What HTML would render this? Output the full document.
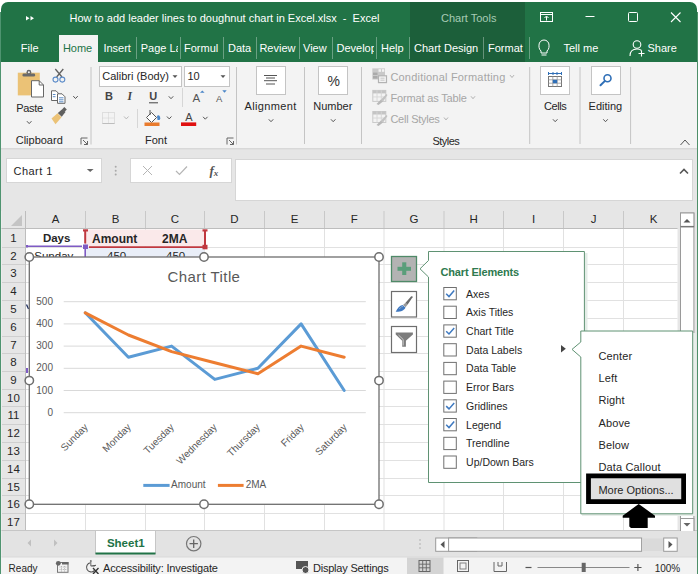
<!DOCTYPE html>
<html><head><meta charset="utf-8">
<style>
*{margin:0;padding:0;box-sizing:border-box}
html,body{width:700px;height:574px;overflow:hidden;background:#fff;font-family:"Liberation Sans",sans-serif;color:#262626}
.a{position:absolute}
.t{position:absolute;line-height:1;white-space:nowrap}
svg{position:absolute;overflow:visible}
</style></head><body>
<div class="a" style="left:0px;top:0px;width:700px;height:574px;background:#fff"></div>
<div class="a" style="left:0px;top:12px;width:697.5px;height:562px;background:#f3f3f3;border-left:1.6px solid #4f9470;border-right:1.2px solid #4e8f69"></div>
<div class="a" style="left:1px;top:2px;width:696px;height:60px;background:#217346;border-radius:7px 7px 0 0"></div>
<div class="a" style="left:410px;top:2px;width:115px;height:60px;background:#1c5f3a"></div>
<svg style="left:0;top:0" width="700" height="62"><path d="M26 16 L29.5 18.2 L26 20.4Z M30.5 16 L34 18.2 L30.5 20.4Z" fill="#fff"/><rect x="540.5" y="12.5" width="12" height="9" fill="none" stroke="#fff" stroke-width="1"/><line x1="540.5" y1="14.5" x2="552.5" y2="14.5" stroke="#fff"/><path d="M546.5 20.5 V16.5 M544.5 18 L546.5 16 L548.5 18" fill="none" stroke="#fff"/><line x1="585.5" y1="16.5" x2="594.5" y2="16.5" stroke="#fff"/><rect x="628.5" y="12.5" width="9" height="9" rx="1" fill="none" stroke="#fff"/><path d="M671 12.5 L680.5 22 M680.5 12.5 L671 22" stroke="#fff" stroke-width="1.1"/><path d="M541 51 C538.5 49 539 45.5 539 45 A5 5 0 0 1 549 45 C549 45.5 549.5 49 547 51 V53 H541Z" fill="none" stroke="#fff" stroke-width="1"/><line x1="541.5" y1="55" x2="546.5" y2="55" stroke="#fff"/><circle cx="637" cy="44.5" r="3.8" fill="none" stroke="#fff" stroke-width="1.1"/><path d="M630 56 C630 51 633 49 637 49 C639 49 640.5 49.5 641.5 50.5" fill="none" stroke="#fff" stroke-width="1.1"/><path d="M641.5 50.5 V56.5 M638.5 53.5 H644.5" stroke="#fff" stroke-width="1.1"/></svg>
<div class="t" style="left:69.5px;top:12.79px;font-size:11px;color:#fff;font-weight:400;">How to add leader lines to doughnut chart in Excel.xlsx &nbsp;- &nbsp;Excel</div>
<div class="t" style="left:441.0px;top:12.79px;font-size:11px;color:#a8cbb5;font-weight:400;">Chart Tools</div>
<div class="a" style="left:59px;top:35px;width:39px;height:28px;background:#f3f3f3"></div>
<div class="t" style="left:20.8px;top:42.79px;font-size:11px;color:#fff;font-weight:400;">File</div>
<div class="t" style="left:62.9px;top:42.79px;font-size:11px;color:#217346;font-weight:400;">Home</div>
<div class="t" style="left:103.4px;top:42.79px;font-size:11px;color:#fff;font-weight:400;">Insert</div>
<div class="t" style="left:140.7px;top:42.79px;font-size:11px;color:#fff;font-weight:400;">Page L<span style="display:inline-block;width:2.6px;overflow:hidden;vertical-align:top">a</span></div>
<div class="t" style="left:184.0px;top:42.79px;font-size:11px;color:#fff;font-weight:400;">Formul</div>
<div class="t" style="left:228.0px;top:42.79px;font-size:11px;color:#fff;font-weight:400;">Data</div>
<div class="t" style="left:259.4px;top:42.79px;font-size:11px;color:#fff;font-weight:400;">Review</div>
<div class="t" style="left:303.0px;top:42.79px;font-size:11px;color:#fff;font-weight:400;">View</div>
<div class="t" style="left:336.5px;top:42.79px;font-size:11px;color:#fff;font-weight:400;">Develo<span style="display:inline-block;width:3.5px;overflow:hidden;vertical-align:top">p</span></div>
<div class="t" style="left:381.0px;top:42.79px;font-size:11px;color:#fff;font-weight:400;">Help</div>
<div class="t" style="left:414.0px;top:42.79px;font-size:11px;color:#fff;font-weight:400;">Chart Design</div>
<div class="t" style="left:488.0px;top:42.79px;font-size:11px;color:#fff;font-weight:400;">Format</div>
<div class="t" style="left:563.5px;top:42.79px;font-size:11px;color:#fff;font-weight:400;">Tell me</div>
<div class="t" style="left:647.5px;top:42.79px;font-size:11px;color:#fff;font-weight:400;">Share</div>
<div class="a" style="left:136px;top:37px;width:1px;height:22px;background:rgba(255,255,255,.33)"></div>
<div class="a" style="left:180px;top:37px;width:1px;height:22px;background:rgba(255,255,255,.33)"></div>
<div class="a" style="left:223px;top:37px;width:1px;height:22px;background:rgba(255,255,255,.33)"></div>
<div class="a" style="left:255.5px;top:37px;width:1px;height:22px;background:rgba(255,255,255,.33)"></div>
<div class="a" style="left:298.5px;top:37px;width:1px;height:22px;background:rgba(255,255,255,.33)"></div>
<div class="a" style="left:331.5px;top:37px;width:1px;height:22px;background:rgba(255,255,255,.33)"></div>
<div class="a" style="left:375.5px;top:37px;width:1px;height:22px;background:rgba(255,255,255,.33)"></div>
<div class="a" style="left:409px;top:37px;width:1px;height:22px;background:rgba(255,255,255,.33)"></div>
<div class="a" style="left:482.5px;top:37px;width:1px;height:22px;background:rgba(255,255,255,.33)"></div>
<div class="a" style="left:528.5px;top:37px;width:1px;height:22px;background:rgba(255,255,255,.33)"></div>
<svg style="left:0;top:0" width="700" height="150"><rect x="17.8" y="72.7" width="22" height="22.7" fill="#ebc276"/><rect x="22.5" y="73.5" width="12.6" height="3" rx="1.3" fill="#6a6a6a"/><circle cx="28.9" cy="72.2" r="2.4" fill="#6a6a6a"/><circle cx="28.9" cy="72.2" r="1" fill="#f3f3f3"/><path d="M31.5 80.7 H39.2 L43.5 85 V97 H31.5Z" fill="#fff" stroke="#676767" stroke-width="1"/><path d="M39.2 80.7 V85 H43.5" fill="none" stroke="#676767" stroke-width="1"/><path d="M55.3 69 L62 77 M63.3 69 L56.6 77" stroke="#616161" stroke-width="1.3"/><circle cx="55.5" cy="79.6" r="2.5" fill="none" stroke="#5b8bc9" stroke-width="1.1"/><circle cx="62.3" cy="79.6" r="2.5" fill="#f3f3f3" stroke="#5b8bc9" stroke-width="1.1"/><path d="M51.5 90.8 H56 L58.5 93.3 V100.5 H51.5Z" fill="#fff" stroke="#666" stroke-width="1"/><path d="M52.8 94.5 H55.5 M52.8 96.7 H55.5" stroke="#4a7fc0" stroke-width=".9"/><path d="M57.5 93.8 H62 L65 96.8 V103.3 H57.5Z" fill="#fff" stroke="#666" stroke-width="1"/><path d="M59 97.8 H63.5 M59 99.8 H63.5 M59 101.8 H63.5" stroke="#4a7fc0" stroke-width=".9"/><path d="M51.5 118.5 L57.5 113.2 L61.5 117.2 L55.5 124.2 Z" fill="#ebc276"/><path d="M57.8 113 L62.5 109 L65.5 112 L61.7 116.8Z" fill="#5f5f5f"/><path d="M62.2 109.2 L64.3 107 L66.8 109.6 L64.6 111.7Z" fill="#5f5f5f"/><path d="M26.95 121.2 L29.2 123.60000000000001 L31.45 121.2" fill="none" stroke="#555" stroke-width="1"/><path d="M73.25 96.1 L75.5 98.5 L77.75 96.1" fill="none" stroke="#555" stroke-width="1"/><path d="M168.75 96.3 L171 98.7 L173.25 96.3" fill="none" stroke="#555" stroke-width="1"/><path d="M124.05 116.5 L126.3 118.9 L128.55 116.5" fill="none" stroke="#b8b8b8" stroke-width="1"/><path d="M166.95 116.5 L169.2 118.9 L171.45 116.5" fill="none" stroke="#555" stroke-width="1"/><path d="M203.05 116.8 L205.3 119.2 L207.55 116.8" fill="none" stroke="#555" stroke-width="1"/><path d="M268.75 119.3 L271 121.7 L273.25 119.3" fill="none" stroke="#555" stroke-width="1"/><path d="M330.95 119.3 L333.2 121.7 L335.45 119.3" fill="none" stroke="#555" stroke-width="1"/><path d="M552.95 119.3 L555.2 121.7 L557.45 119.3" fill="none" stroke="#555" stroke-width="1"/><path d="M603.25 119.3 L605.5 121.7 L607.75 119.3" fill="none" stroke="#555" stroke-width="1"/><path d="M510.0 75.1 L512 77.5 L514.0 75.1" fill="none" stroke="#b0b0b0" stroke-width="1"/><path d="M471.0 96.3 L473 98.7 L475.0 96.3" fill="none" stroke="#b0b0b0" stroke-width="1"/><path d="M444.0 117.5 L446 119.9 L448.0 117.5" fill="none" stroke="#b0b0b0" stroke-width="1"/><path d="M81.0 144.5 V138.0 H87.5" fill="none" stroke="#666" stroke-width="1"/><path d="M83.0 140.0 L87.5 144.5 M87.5 141.0 V144.5 H84.0" fill="none" stroke="#666" stroke-width="1"/><path d="M227.0 144.5 V138.0 H233.5" fill="none" stroke="#666" stroke-width="1"/><path d="M229.0 140.0 L233.5 144.5 M233.5 141.0 V144.5 H230.0" fill="none" stroke="#666" stroke-width="1"/><line x1="91" y1="67" x2="91" y2="144.5" stroke="#c4c4c4" stroke-width="1"/><line x1="236.5" y1="67" x2="236.5" y2="144.5" stroke="#c4c4c4" stroke-width="1"/><line x1="304.5" y1="67" x2="304.5" y2="144" stroke="#c4c4c4" stroke-width="1"/><line x1="361.5" y1="67" x2="361.5" y2="144" stroke="#c4c4c4" stroke-width="1"/><line x1="529.7" y1="67" x2="529.7" y2="144" stroke="#c4c4c4" stroke-width="1"/><line x1="580" y1="67" x2="580" y2="144" stroke="#c4c4c4" stroke-width="1"/><line x1="630.6" y1="67" x2="630.6" y2="144" stroke="#c4c4c4" stroke-width="1"/><line x1="182.5" y1="88" x2="182.5" y2="107" stroke="#d6d6d6"/><line x1="137.5" y1="109" x2="137.5" y2="128" stroke="#d6d6d6"/><rect x="99.5" y="66.5" width="82" height="20" fill="#fff" stroke="#c4c4c4"/><rect x="184.5" y="66.5" width="45" height="20" fill="#fff" stroke="#c4c4c4"/><path d="M172.5 75.3 H177.5 L175 78Z M220.5 75.3 H225.5 L223 78Z" fill="#555"/><line x1="149" y1="102.8" x2="158" y2="102.8" stroke="#444" stroke-width="1"/><path d="M200 92.8 L202.3 90.5 L204.6 92.8Z" fill="#4a86c8"/><path d="M222.3 90.3 L226.7 90.3 L224.5 92.7Z" fill="#4a86c8"/><rect x="102.5" y="112.5" width="12" height="11" fill="none" stroke="#c8c8c8" stroke-dasharray="1 1"/><path d="M108.5 112.5 V123.5 M102.5 118 H114.5" stroke="#d0d0d0" stroke-dasharray="1 1"/><line x1="102.5" y1="123.5" x2="114.5" y2="123.5" stroke="#bdbdbd"/><path d="M146.5 117.5 L151.5 112.5 L156.5 117.5 L151.5 122.5Z" fill="#fff" stroke="#555" stroke-width="1"/><path d="M150 110 V115" stroke="#555" stroke-width="1"/><path d="M157 116 A2 2.5 0 0 1 159.5 120 L157.5 120Z" fill="#4a86c8"/><rect x="144.5" y="122.5" width="15" height="3.5" fill="#e97b2d"/><rect x="181" y="122.4" width="15.2" height="3.6" fill="#e01010"/><rect x="256.5" y="66.5" width="29" height="28" fill="#fff" stroke="#c4c4c4"/><rect x="318.5" y="66.5" width="29" height="28" fill="#fff" stroke="#c4c4c4"/><rect x="540.5" y="66.5" width="29" height="28" fill="#fff" stroke="#c4c4c4"/><rect x="591.5" y="66.5" width="29" height="28" fill="#fff" stroke="#c4c4c4"/><path d="M264 75.5 H277 M266 78 H275 M264 80.7 H277 M266 84 H275" stroke="#555" stroke-width="1"/><rect x="548.5" y="76.5" width="13" height="10" fill="#fff" stroke="#777"/><path d="M548.5 79.8 H561.5 M548.5 83.2 H561.5 M552.8 76.5 V86.5 M557.2 76.5 V86.5" stroke="#999" stroke-width=".8"/><rect x="552.8" y="79.8" width="4.4" height="3.4" fill="#2f6fb7"/><path d="M548.5 73.5 H561.5 M548.5 72 V75 M553 72 V75 M557 72 V75 M561.5 72 V75" stroke="#2f6fb7" stroke-width="1"/><circle cx="607.5" cy="78.3" r="3.5" fill="none" stroke="#2f6fb7" stroke-width="1.6"/><line x1="604.7" y1="81.1" x2="600.5" y2="85.3" stroke="#2f6fb7" stroke-width="2" stroke-linecap="round"/><rect x="372.3" y="68.4" width="12.7" height="11.1" fill="#c9c9c9"/><rect x="378.5" y="69.2" width="2.6" height="2.6" fill="#f3f3f3"/><rect x="382" y="69.2" width="2.3" height="2.6" fill="#f3f3f3"/><rect x="373" y="72.6" width="4.5" height="2.4" fill="#aaa"/><rect x="373" y="76" width="4.5" height="2.6" fill="#aaa"/><rect x="378.5" y="75.8" width="8" height="6.8" fill="#f3f3f3" stroke="#b3b3b3" stroke-width="1.2"/><path d="M380.5 78.2 H384.5 M380.5 80.2 H384.5" stroke="#bbb" stroke-width=".8"/><rect x="372.8" y="90.4" width="13" height="11" fill="#f3f3f3" stroke="#cacaca" stroke-width="1"/><rect x="372.8" y="90.4" width="13" height="3" fill="#c4c4c4"/><path d="M372.8 96.9 H385.8 M377 90.4 V101.4 M381.3 90.4 V101.4" stroke="#d6d6d6" stroke-width=".9"/><path d="M376.5 103.9 L381 99.4 L383 101.4 L378.5 104.9Z" fill="#b8b8b8"/><path d="M381 99.4 L386.5 93.9 L387.5 94.9 L383 101.4Z" fill="#c2c2c2"/><rect x="372.8" y="111.5" width="13" height="11" fill="#f3f3f3" stroke="#cacaca" stroke-width="1"/><rect x="372.8" y="111.5" width="13" height="3" fill="#c4c4c4"/><path d="M372.8 118 H385.8 M377 111.5 V122.5 M381.3 111.5 V122.5" stroke="#d6d6d6" stroke-width=".9"/><path d="M376.5 125 L381 120.5 L383 122.5 L378.5 126Z" fill="#b8b8b8"/><path d="M381 120.5 L386.5 115 L387.5 116 L383 122.5Z" fill="#c2c2c2"/><path d="M680.5 145 L685 140 L689.5 145" fill="none" stroke="#555" stroke-width="1"/></svg>
<div class="t" style="left:16.3px;top:102.59px;font-size:11px;color:#262626;font-weight:400;letter-spacing:-.35px">Paste</div>
<div class="t" style="left:15.7px;top:135.49px;font-size:11px;color:#262626;font-weight:400;">Clipboard</div>
<div class="t" style="left:102.2px;top:70.69px;font-size:11px;color:#262626;font-weight:400;">Calibri (Body)</div>
<div class="t" style="left:187.5px;top:70.69px;font-size:11px;color:#262626;font-weight:400;">10</div>
<div class="t" style="left:104.9px;top:91.09px;font-size:11px;color:#444;font-weight:700;">B</div>
<div class="t" style="left:127.5px;top:90.67px;font-size:11.5px;color:#444;font-weight:700;font-family:Liberation Serif"><i>I</i></div>
<div class="t" style="left:149.2px;top:91.09px;font-size:11px;color:#444;font-weight:700;">U</div>
<div class="t" style="left:192.6px;top:92.77px;font-size:11.5px;color:#555;font-weight:400;">A</div>
<div class="t" style="left:216.0px;top:94.46px;font-size:9.5px;color:#555;font-weight:400;">A</div>
<div class="t" style="left:185.2px;top:111.99px;font-size:11px;color:#444;font-weight:400;">A</div>
<div class="t" style="left:145.0px;top:135.29px;font-size:11px;color:#262626;font-weight:400;">Font</div>
<div class="t" style="left:244.5px;top:100.59px;font-size:11px;color:#262626;font-weight:400;letter-spacing:.35px">Alignment</div>
<div class="t" style="left:313.2px;top:100.59px;font-size:11px;color:#262626;font-weight:400;">Number</div>
<div class="t" style="left:327.5px;top:73.95px;font-size:14px;color:#333;font-weight:400;">%</div>
<div class="t" style="left:390.4px;top:71.59px;font-size:11px;color:#a6a6a6;font-weight:400;letter-spacing:.2px">Conditional Formatting</div>
<div class="t" style="left:390.4px;top:92.79px;font-size:11px;color:#a6a6a6;font-weight:400;letter-spacing:-.15px">Format as Table</div>
<div class="t" style="left:390.4px;top:113.89px;font-size:11px;color:#a6a6a6;font-weight:400;letter-spacing:-.25px">Cell Styles</div>
<div class="t" style="left:432.4px;top:135.69px;font-size:11px;color:#262626;font-weight:400;letter-spacing:-.5px">Styles</div>
<div class="t" style="left:543.9px;top:100.59px;font-size:11px;color:#262626;font-weight:400;letter-spacing:-.4px">Cells</div>
<div class="t" style="left:588.6px;top:100.59px;font-size:11px;color:#262626;font-weight:400;">Editing</div>
<div class="a" style="left:1px;top:148px;width:696px;height:63px;background:#e6e6e6"></div>
<div class="a" style="left:1px;top:147.5px;width:696px;height:1px;background:#d8d8d8"></div>
<div class="a" style="left:1px;top:148.5px;width:696px;height:1.5px;background:#e0e0e0"></div>
<svg style="left:0;top:0" width="700" height="210"><rect x="6.5" y="158.5" width="95" height="24" fill="#fff" stroke="#d6d6d6"/><path d="M86.8 169 H93.6 L90.2 172Z" fill="#666"/><circle cx="115.7" cy="166.7" r="1" fill="#aaa"/><circle cx="115.7" cy="170.7" r="1" fill="#aaa"/><circle cx="115.7" cy="174.5" r="1" fill="#aaa"/><rect x="130.5" y="158.5" width="101" height="24" fill="#fff" stroke="#d6d6d6"/><path d="M143 166 L152 175 M152 166 L143 175" stroke="#b5b5b5" stroke-width="1"/><path d="M176 171 L179.5 174.5 L187 166.5" fill="none" stroke="#b5b5b5" stroke-width="1.2"/><rect x="235.5" y="159.5" width="457" height="41" fill="#fff" stroke="#d6d6d6"/><path d="M680 173.5 L684 169.5 L688 173.5" fill="none" stroke="#555" stroke-width="1.6"/></svg>
<div class="t" style="left:13.6px;top:166.09px;font-size:11px;color:#262626;font-weight:400;letter-spacing:.45px">Chart 1</div>
<div class="t" style="left:209.5px;top:164.00px;font-size:13px;color:#555;font-weight:700;font-family:Liberation Serif"><i>f</i><span style="font-size:9px;position:relative;top:1px"><i>x</i></span></div>
<svg style="left:0;top:0" width="700" height="574"><rect x="1.5" y="211" width="695.5" height="320" fill="#e6e6e6"/><rect x="26" y="229" width="651.5" height="302" fill="#fff"/><line x1="85.5" y1="229" x2="85.5" y2="531" stroke="#e1e1e1" stroke-width="1"/><line x1="145.5" y1="229" x2="145.5" y2="531" stroke="#e1e1e1" stroke-width="1"/><line x1="204.5" y1="229" x2="204.5" y2="531" stroke="#e1e1e1" stroke-width="1"/><line x1="264.5" y1="229" x2="264.5" y2="531" stroke="#e1e1e1" stroke-width="1"/><line x1="324.5" y1="229" x2="324.5" y2="531" stroke="#e1e1e1" stroke-width="1"/><line x1="384" y1="229" x2="384" y2="531" stroke="#e1e1e1" stroke-width="1"/><line x1="444" y1="229" x2="444" y2="531" stroke="#e1e1e1" stroke-width="1"/><line x1="503.5" y1="229" x2="503.5" y2="531" stroke="#e1e1e1" stroke-width="1"/><line x1="563.5" y1="229" x2="563.5" y2="531" stroke="#e1e1e1" stroke-width="1"/><line x1="623.5" y1="229" x2="623.5" y2="531" stroke="#e1e1e1" stroke-width="1"/><line x1="26" y1="247.5" x2="677.5" y2="247.5" stroke="#e1e1e1" stroke-width="1"/><line x1="26" y1="264.5" x2="677.5" y2="264.5" stroke="#e1e1e1" stroke-width="1"/><line x1="26" y1="282.5" x2="677.5" y2="282.5" stroke="#e1e1e1" stroke-width="1"/><line x1="26" y1="300.5" x2="677.5" y2="300.5" stroke="#e1e1e1" stroke-width="1"/><line x1="26" y1="318.5" x2="677.5" y2="318.5" stroke="#e1e1e1" stroke-width="1"/><line x1="26" y1="336.5" x2="677.5" y2="336.5" stroke="#e1e1e1" stroke-width="1"/><line x1="26" y1="353.5" x2="677.5" y2="353.5" stroke="#e1e1e1" stroke-width="1"/><line x1="26" y1="371.5" x2="677.5" y2="371.5" stroke="#e1e1e1" stroke-width="1"/><line x1="26" y1="389.5" x2="677.5" y2="389.5" stroke="#e1e1e1" stroke-width="1"/><line x1="26" y1="406.5" x2="677.5" y2="406.5" stroke="#e1e1e1" stroke-width="1"/><line x1="26" y1="424.5" x2="677.5" y2="424.5" stroke="#e1e1e1" stroke-width="1"/><line x1="26" y1="442.5" x2="677.5" y2="442.5" stroke="#e1e1e1" stroke-width="1"/><line x1="26" y1="460.5" x2="677.5" y2="460.5" stroke="#e1e1e1" stroke-width="1"/><line x1="26" y1="478.5" x2="677.5" y2="478.5" stroke="#e1e1e1" stroke-width="1"/><line x1="26" y1="495.5" x2="677.5" y2="495.5" stroke="#e1e1e1" stroke-width="1"/><line x1="26" y1="513.5" x2="677.5" y2="513.5" stroke="#e1e1e1" stroke-width="1"/><line x1="85.5" y1="211" x2="85.5" y2="229" stroke="#c8c8c8" stroke-width="1"/><line x1="145.5" y1="211" x2="145.5" y2="229" stroke="#c8c8c8" stroke-width="1"/><line x1="204.5" y1="211" x2="204.5" y2="229" stroke="#c8c8c8" stroke-width="1"/><line x1="264.5" y1="211" x2="264.5" y2="229" stroke="#c8c8c8" stroke-width="1"/><line x1="324.5" y1="211" x2="324.5" y2="229" stroke="#c8c8c8" stroke-width="1"/><line x1="384" y1="211" x2="384" y2="229" stroke="#c8c8c8" stroke-width="1"/><line x1="444" y1="211" x2="444" y2="229" stroke="#c8c8c8" stroke-width="1"/><line x1="503.5" y1="211" x2="503.5" y2="229" stroke="#c8c8c8" stroke-width="1"/><line x1="563.5" y1="211" x2="563.5" y2="229" stroke="#c8c8c8" stroke-width="1"/><line x1="623.5" y1="211" x2="623.5" y2="229" stroke="#c8c8c8" stroke-width="1"/><line x1="2" y1="247.5" x2="25.5" y2="247.5" stroke="#cfcfcf" stroke-width="1"/><line x1="2" y1="264.5" x2="25.5" y2="264.5" stroke="#cfcfcf" stroke-width="1"/><line x1="2" y1="282.5" x2="25.5" y2="282.5" stroke="#cfcfcf" stroke-width="1"/><line x1="2" y1="300.5" x2="25.5" y2="300.5" stroke="#cfcfcf" stroke-width="1"/><line x1="2" y1="318.5" x2="25.5" y2="318.5" stroke="#cfcfcf" stroke-width="1"/><line x1="2" y1="336.5" x2="25.5" y2="336.5" stroke="#cfcfcf" stroke-width="1"/><line x1="2" y1="353.5" x2="25.5" y2="353.5" stroke="#cfcfcf" stroke-width="1"/><line x1="2" y1="371.5" x2="25.5" y2="371.5" stroke="#cfcfcf" stroke-width="1"/><line x1="2" y1="389.5" x2="25.5" y2="389.5" stroke="#cfcfcf" stroke-width="1"/><line x1="2" y1="406.5" x2="25.5" y2="406.5" stroke="#cfcfcf" stroke-width="1"/><line x1="2" y1="424.5" x2="25.5" y2="424.5" stroke="#cfcfcf" stroke-width="1"/><line x1="2" y1="442.5" x2="25.5" y2="442.5" stroke="#cfcfcf" stroke-width="1"/><line x1="2" y1="460.5" x2="25.5" y2="460.5" stroke="#cfcfcf" stroke-width="1"/><line x1="2" y1="478.5" x2="25.5" y2="478.5" stroke="#cfcfcf" stroke-width="1"/><line x1="2" y1="495.5" x2="25.5" y2="495.5" stroke="#cfcfcf" stroke-width="1"/><line x1="2" y1="513.5" x2="25.5" y2="513.5" stroke="#cfcfcf" stroke-width="1"/><line x1="1.5" y1="228.5" x2="677.5" y2="228.5" stroke="#bdbdbd" stroke-width="1"/><line x1="25.5" y1="211" x2="25.5" y2="531" stroke="#bdbdbd" stroke-width="1"/><line x1="1.5" y1="530.5" x2="697" y2="530.5" stroke="#c6c6c6" stroke-width="1"/><path d="M22 215 V226 H11Z" fill="#c4c4c4"/><rect x="86" y="229.5" width="118.5" height="17" fill="#fae9ea"/><rect x="86" y="248" width="118.5" height="9" fill="#e9eef8"/><rect x="26" y="248" width="59" height="9" fill="#fff"/><rect x="680.5" y="213" width="13.4" height="318" fill="#fff" stroke="#9a9a9a" stroke-width="1"/><rect x="680.5" y="213" width="13.4" height="14" fill="#fff" stroke="#9a9a9a" stroke-width="1"/><line x1="680.5" y1="226.5" x2="694" y2="226.5" stroke="#777" stroke-width="1.2"/><path d="M683.5 222.5 H690.5 L687 219Z" fill="#555"/><rect x="680.5" y="518.5" width="13.4" height="13" fill="#fff" stroke="#9a9a9a" stroke-width="1"/><path d="M683.5 523 H690.5 L687 526.5Z" fill="#666"/></svg>
<div class="t" style="left:25.5px;width:60.0px;text-align:center;top:214.37px;font-size:11.5px;color:#262626">A</div>
<div class="t" style="left:85.5px;width:60.0px;text-align:center;top:214.37px;font-size:11.5px;color:#262626">B</div>
<div class="t" style="left:145.5px;width:59.0px;text-align:center;top:214.37px;font-size:11.5px;color:#262626">C</div>
<div class="t" style="left:204.5px;width:60.0px;text-align:center;top:214.37px;font-size:11.5px;color:#262626">D</div>
<div class="t" style="left:264.5px;width:60.0px;text-align:center;top:214.37px;font-size:11.5px;color:#262626">E</div>
<div class="t" style="left:324.5px;width:59.5px;text-align:center;top:214.37px;font-size:11.5px;color:#262626">F</div>
<div class="t" style="left:384px;width:60px;text-align:center;top:214.37px;font-size:11.5px;color:#262626">G</div>
<div class="t" style="left:444px;width:59.5px;text-align:center;top:214.37px;font-size:11.5px;color:#262626">H</div>
<div class="t" style="left:503.5px;width:60.0px;text-align:center;top:214.37px;font-size:11.5px;color:#262626">I</div>
<div class="t" style="left:563.5px;width:60.0px;text-align:center;top:214.37px;font-size:11.5px;color:#262626">J</div>
<div class="t" style="left:623.5px;width:60.0px;text-align:center;top:214.37px;font-size:11.5px;color:#262626">K</div>
<div class="t" style="left:1.5px;width:24px;text-align:center;top:233.27px;font-size:11.5px;color:#262626">1</div>
<div class="t" style="left:1.5px;width:24px;text-align:center;top:250.77px;font-size:11.5px;color:#262626">2</div>
<div class="t" style="left:1.5px;width:24px;text-align:center;top:268.27px;font-size:11.5px;color:#262626">3</div>
<div class="t" style="left:1.5px;width:24px;text-align:center;top:286.27px;font-size:11.5px;color:#262626">4</div>
<div class="t" style="left:1.5px;width:24px;text-align:center;top:304.27px;font-size:11.5px;color:#262626">5</div>
<div class="t" style="left:1.5px;width:24px;text-align:center;top:322.27px;font-size:11.5px;color:#262626">6</div>
<div class="t" style="left:1.5px;width:24px;text-align:center;top:339.77px;font-size:11.5px;color:#262626">7</div>
<div class="t" style="left:1.5px;width:24px;text-align:center;top:357.27px;font-size:11.5px;color:#262626">8</div>
<div class="t" style="left:1.5px;width:24px;text-align:center;top:375.27px;font-size:11.5px;color:#262626">9</div>
<div class="t" style="left:1.5px;width:24px;text-align:center;top:392.77px;font-size:11.5px;color:#262626">10</div>
<div class="t" style="left:1.5px;width:24px;text-align:center;top:410.27px;font-size:11.5px;color:#262626">11</div>
<div class="t" style="left:1.5px;width:24px;text-align:center;top:428.27px;font-size:11.5px;color:#262626">12</div>
<div class="t" style="left:1.5px;width:24px;text-align:center;top:446.27px;font-size:11.5px;color:#262626">13</div>
<div class="t" style="left:1.5px;width:24px;text-align:center;top:464.27px;font-size:11.5px;color:#262626">14</div>
<div class="t" style="left:1.5px;width:24px;text-align:center;top:481.77px;font-size:11.5px;color:#262626">15</div>
<div class="t" style="left:1.5px;width:24px;text-align:center;top:499.27px;font-size:11.5px;color:#262626">16</div>
<div class="t" style="left:1.5px;width:24px;text-align:center;top:517.27px;font-size:11.5px;color:#262626">17</div>
<div class="t" style="left:42.9px;top:232.97px;font-size:11.5px;color:#262626;font-weight:700;">Days</div>
<div class="t" style="left:92.0px;top:232.54px;font-size:12px;color:#262626;font-weight:700;">Amount</div>
<div class="t" style="left:162.0px;top:232.54px;font-size:12px;color:#262626;font-weight:700;">2MA</div>
<div class="a" style="left:26px;top:247px;width:652px;height:10px;overflow:hidden">
<div class="t" style="left:8.3px;top:3.77px;font-size:11.5px">Sunday</div>
<div class="t" style="left:81px;top:3.77px;font-size:11.5px">450</div>
<div class="t" style="left:140px;top:3.77px;font-size:11.5px">450</div>
</div>
<svg style="left:0;top:0" width="700" height="574"><line x1="26" y1="246.2" x2="82" y2="246.2" stroke="#7e5bc4" stroke-width="1.6"/><rect x="26" y="368" width="2" height="5" fill="#7e5bc4"/><path d="M26.5 304.5 L28.5 309" stroke="#1f2f5f" stroke-width="1.3"/><line x1="85.2" y1="249" x2="85.2" y2="257" stroke="#7e5bc4" stroke-width="1.6"/><rect x="83" y="244.5" width="5" height="4.5" fill="#7e5bc4"/><rect x="26" y="245" width="2" height="2.5" fill="#7e5bc4"/><line x1="85.2" y1="231" x2="85.2" y2="243.5" stroke="#c0383f" stroke-width="2"/><rect x="83" y="229.3" width="5" height="2.2" fill="#c0383f"/><line x1="89" y1="247.2" x2="203" y2="247.2" stroke="#c0383f" stroke-width="1.8"/><line x1="205" y1="231" x2="205" y2="245" stroke="#c0383f" stroke-width="2"/><rect x="202.5" y="229.3" width="5" height="2.2" fill="#c0383f"/><rect x="202.5" y="244.8" width="5" height="4.5" fill="#c0383f"/></svg>
<svg style="left:0;top:0" width="700" height="574"><rect x="29.3" y="257" width="349.7" height="247.3" fill="#fff" stroke="#6e6e6e" stroke-width="1.3"/><line x1="63.7" y1="301.7" x2="365.8" y2="301.7" stroke="#d9d9d9" stroke-width="1"/><line x1="63.7" y1="323.9" x2="365.8" y2="323.9" stroke="#d9d9d9" stroke-width="1"/><line x1="63.7" y1="346.1" x2="365.8" y2="346.1" stroke="#d9d9d9" stroke-width="1"/><line x1="63.7" y1="368.3" x2="365.8" y2="368.3" stroke="#d9d9d9" stroke-width="1"/><line x1="63.7" y1="390.5" x2="365.8" y2="390.5" stroke="#d9d9d9" stroke-width="1"/><line x1="63.7" y1="412.7" x2="365.8" y2="412.7" stroke="#d9d9d9" stroke-width="1"/><polyline points="85.3,312.8 128.4,357.2 171.6,346.1 214.8,379.4 257.9,368.3 301.1,323.9 344.2,390.5" fill="none" stroke="#5b9bd5" stroke-width="3" stroke-linejoin="round" stroke-linecap="round"/><polyline points="85.3,312.8 128.4,335.0 171.6,351.6 214.8,362.8 257.9,373.8 301.1,346.1 344.2,357.2" fill="none" stroke="#ed7d31" stroke-width="3" stroke-linejoin="round" stroke-linecap="round"/><line x1="143.3" y1="485.4" x2="169.6" y2="485.4" stroke="#5b9bd5" stroke-width="3"/><line x1="217.9" y1="485.4" x2="243.6" y2="485.4" stroke="#ed7d31" stroke-width="3"/><circle cx="29.3" cy="257" r="4.2" fill="#fff" stroke="#6e6e6e" stroke-width="1.5"/><circle cx="204" cy="257" r="4.2" fill="#fff" stroke="#6e6e6e" stroke-width="1.5"/><circle cx="379" cy="257" r="4.2" fill="#fff" stroke="#6e6e6e" stroke-width="1.5"/><circle cx="29.3" cy="380.6" r="4.2" fill="#fff" stroke="#6e6e6e" stroke-width="1.5"/><circle cx="379" cy="380.6" r="4.2" fill="#fff" stroke="#6e6e6e" stroke-width="1.5"/><circle cx="29.3" cy="504.3" r="4.2" fill="#fff" stroke="#6e6e6e" stroke-width="1.5"/><circle cx="204" cy="504.3" r="4.2" fill="#fff" stroke="#6e6e6e" stroke-width="1.5"/><circle cx="379" cy="504.3" r="4.2" fill="#fff" stroke="#6e6e6e" stroke-width="1.5"/></svg>
<div class="t" style="left:167.6px;top:269.00px;font-size:15px;color:#595959;font-weight:400;letter-spacing:.4px">Chart Title</div>
<div class="t" style="left:20px;width:33px;text-align:right;top:296.74px;font-size:10px;color:#595959">500</div>
<div class="t" style="left:20px;width:33px;text-align:right;top:318.94px;font-size:10px;color:#595959">400</div>
<div class="t" style="left:20px;width:33px;text-align:right;top:341.13px;font-size:10px;color:#595959">300</div>
<div class="t" style="left:20px;width:33px;text-align:right;top:363.33px;font-size:10px;color:#595959">200</div>
<div class="t" style="left:20px;width:33px;text-align:right;top:385.54px;font-size:10px;color:#595959">100</div>
<div class="t" style="left:20px;width:33px;text-align:right;top:407.74px;font-size:10px;color:#595959">0</div>
<div class="t" style="left:-17.3px;top:421.6px;width:100px;text-align:right;font-size:10px;color:#595959;transform-origin:100% 0;transform:rotate(-45deg)">Sunday</div>
<div class="t" style="left:25.8px;top:421.6px;width:100px;text-align:right;font-size:10px;color:#595959;transform-origin:100% 0;transform:rotate(-45deg)">Monday</div>
<div class="t" style="left:69.0px;top:421.6px;width:100px;text-align:right;font-size:10px;color:#595959;transform-origin:100% 0;transform:rotate(-45deg)">Tuesday</div>
<div class="t" style="left:112.2px;top:421.6px;width:100px;text-align:right;font-size:10px;color:#595959;transform-origin:100% 0;transform:rotate(-45deg)">Wednesday</div>
<div class="t" style="left:155.3px;top:421.6px;width:100px;text-align:right;font-size:10px;color:#595959;transform-origin:100% 0;transform:rotate(-45deg)">Thursday</div>
<div class="t" style="left:198.5px;top:421.6px;width:100px;text-align:right;font-size:10px;color:#595959;transform-origin:100% 0;transform:rotate(-45deg)">Friday</div>
<div class="t" style="left:241.6px;top:421.6px;width:100px;text-align:right;font-size:10px;color:#595959;transform-origin:100% 0;transform:rotate(-45deg)">Saturday</div>
<div class="t" style="left:171.1px;top:480.44px;font-size:10px;color:#595959;font-weight:400;">Amount</div>
<div class="t" style="left:245.7px;top:480.44px;font-size:10px;color:#595959;font-weight:400;">2MA</div>
<svg style="left:0;top:0" width="700" height="574"><rect x="391.5" y="256.5" width="25" height="25" fill="#b3b3b3" stroke="#4f8a68" stroke-width="1.3"/><rect x="397.5" y="266.8" width="13.5" height="4" fill="#5a9e7a"/><rect x="402.2" y="262.3" width="4.1" height="12.7" fill="#5a9e7a"/><rect x="391.5" y="291.5" width="25" height="25.5" fill="#fff" stroke="#6e6e6e" stroke-width="1.2"/><path d="M395.7 311.8 C397.5 308 399.5 305.5 402.5 305 L405.5 307.5 C404.5 310.5 400.5 312 395.7 311.8Z" fill="#3f78c0"/><path d="M399.5 308.8 C400.5 307.5 401.5 306.8 402.8 306.5" stroke="#9cc0e8" stroke-width="1"/><path d="M403 305 L405.5 302.7 L407.5 304.7 L405.5 307.3Z" fill="#9a9a9a"/><path d="M405.5 302.7 L411 296.5 C412 295.8 412.8 296.3 412.6 297.3 L407.5 304.7Z" fill="#6a6a6a"/><rect x="391.5" y="326.5" width="25" height="26" fill="#fff" stroke="#6e6e6e" stroke-width="1.2"/><path d="M395.7 332.4 H412.9 V334.6 L405.9 340.8 V346.7 L402.2 346.7 V340.8 L395.7 334.6Z" fill="#7c7c7c"/><path d="M398.5 335 L403.2 339.5 V345.5" fill="none" stroke="#e8e8e8" stroke-width=".7"/><path d="M428.5 251.5 H584.4 V482.5 H428.5 V277 L420 268.8 L428.5 260.5Z" fill="#fff" stroke="#5f9273" stroke-width="1"/><rect x="585" y="253" width="2.5" height="230" fill="#e4ece7"/><rect x="443.8" y="287.5" width="12.5" height="12.3" fill="#fff" stroke="#707070" stroke-width="1"/><path d="M446.2 293.8 L449 296.6 L454.2 290.6" fill="none" stroke="#3e79c0" stroke-width="1.5"/><rect x="443.8" y="306.2" width="12.5" height="12.3" fill="#fff" stroke="#707070" stroke-width="1"/><rect x="443.8" y="324.9" width="12.5" height="12.3" fill="#fff" stroke="#707070" stroke-width="1"/><path d="M446.2 331.2 L449 334.0 L454.2 328.0" fill="none" stroke="#3e79c0" stroke-width="1.5"/><rect x="443.8" y="343.7" width="12.5" height="12.3" fill="#fff" stroke="#707070" stroke-width="1"/><rect x="443.8" y="362.4" width="12.5" height="12.3" fill="#fff" stroke="#707070" stroke-width="1"/><rect x="443.8" y="381.1" width="12.5" height="12.3" fill="#fff" stroke="#707070" stroke-width="1"/><rect x="443.8" y="399.8" width="12.5" height="12.3" fill="#fff" stroke="#707070" stroke-width="1"/><path d="M446.2 406.1 L449 408.9 L454.2 402.9" fill="none" stroke="#3e79c0" stroke-width="1.5"/><rect x="443.8" y="418.5" width="12.5" height="12.3" fill="#fff" stroke="#707070" stroke-width="1"/><path d="M446.2 424.8 L449 427.6 L454.2 421.6" fill="none" stroke="#3e79c0" stroke-width="1.5"/><rect x="443.8" y="437.3" width="12.5" height="12.3" fill="#fff" stroke="#707070" stroke-width="1"/><rect x="443.8" y="456.0" width="12.5" height="12.3" fill="#fff" stroke="#707070" stroke-width="1"/><path d="M561 345 L565.8 348.7 L561 352.4Z" fill="#444"/><rect x="582" y="333" width="114" height="183" fill="#e8eeea"/><path d="M580.8 331 H692.7 V513.8 H580.8 V357 L572 349.4 L580.8 342Z" fill="#fff" stroke="#5f9273" stroke-width="1"/><rect x="591" y="478.3" width="90" height="21" fill="#e0e0e0"/><rect x="588.5" y="475.9" width="95.1" height="25.7" fill="none" stroke="#000" stroke-width="4.8"/><path d="M638.7 504 L655 515.7 L655 517.7 L647.7 517.7 L647.7 528 L631 528 L629.3 526.5 L629.3 517.7 L622.7 517.7 L622.7 515.7Z" fill="#000"/></svg>
<div class="t" style="left:440.5px;top:266.99px;font-size:11px;color:#2e7a4f;font-weight:700;letter-spacing:-.15px">Chart Elements</div>
<div class="t" style="left:466.1px;top:288.61px;font-size:10.5px;color:#262626;font-weight:400;">Axes</div>
<div class="t" style="left:466.1px;top:307.33px;font-size:10.5px;color:#262626;font-weight:400;">Axis Titles</div>
<div class="t" style="left:466.1px;top:326.05px;font-size:10.5px;color:#262626;font-weight:400;">Chart Title</div>
<div class="t" style="left:466.1px;top:344.77px;font-size:10.5px;color:#262626;font-weight:400;">Data Labels</div>
<div class="t" style="left:466.1px;top:363.49px;font-size:10.5px;color:#262626;font-weight:400;">Data Table</div>
<div class="t" style="left:466.1px;top:382.21px;font-size:10.5px;color:#262626;font-weight:400;">Error Bars</div>
<div class="t" style="left:466.1px;top:400.93px;font-size:10.5px;color:#262626;font-weight:400;">Gridlines</div>
<div class="t" style="left:466.1px;top:419.65px;font-size:10.5px;color:#262626;font-weight:400;">Legend</div>
<div class="t" style="left:466.1px;top:438.37px;font-size:10.5px;color:#262626;font-weight:400;">Trendline</div>
<div class="t" style="left:466.1px;top:457.09px;font-size:10.5px;color:#262626;font-weight:400;">Up/Down Bars</div>
<div class="t" style="left:598.4px;top:350.69px;font-size:11px;color:#262626;font-weight:400;letter-spacing:.15px">Center</div>
<div class="t" style="left:598.4px;top:373.04px;font-size:11px;color:#262626;font-weight:400;letter-spacing:.15px">Left</div>
<div class="t" style="left:598.4px;top:395.39px;font-size:11px;color:#262626;font-weight:400;letter-spacing:.15px">Right</div>
<div class="t" style="left:598.4px;top:417.74px;font-size:11px;color:#262626;font-weight:400;letter-spacing:.15px">Above</div>
<div class="t" style="left:598.4px;top:440.09px;font-size:11px;color:#262626;font-weight:400;letter-spacing:.15px">Below</div>
<div class="t" style="left:598.4px;top:462.44px;font-size:11px;color:#262626;font-weight:400;letter-spacing:.15px">Data Callout</div>
<div class="t" style="left:598.4px;top:484.79px;font-size:11px;color:#262626;font-weight:400;">More Options...</div>
<svg style="left:0;top:0" width="700" height="574"><rect x="1.5" y="531" width="695.5" height="26" fill="#e3e3e3"/><rect x="1.5" y="557" width="695.5" height="17" fill="#f3f3f3"/><line x1="1.5" y1="557" x2="697" y2="557" stroke="#d9d9d9" stroke-width="1"/><path d="M31 539.5 L27.5 543 L31 546.5Z" fill="#c0c0c0"/><path d="M54 539.5 L57.5 543 L54 546.5Z" fill="#c0c0c0"/><path d="M95.5 531 V554 M155.5 531 V554" stroke="#c6c6c6" stroke-width="1"/><rect x="96" y="531" width="59" height="22.5" fill="#fff"/><rect x="95.5" y="552.5" width="60" height="2" fill="#217346"/><circle cx="193.7" cy="543.7" r="7.2" fill="none" stroke="#777" stroke-width="1.2"/><path d="M189.5 543.7 H197.9 M193.7 539.5 V547.9" stroke="#666" stroke-width="1.3"/><circle cx="420" cy="540" r=".8" fill="#aaa"/><circle cx="420" cy="544" r=".8" fill="#aaa"/><circle cx="420" cy="548" r=".8" fill="#aaa"/><rect x="435.7" y="538" width="41" height="13.3" fill="#fff" stroke="#9a9a9a" stroke-width="1"/><rect x="448.6" y="538" width="193" height="13.3" fill="#fff" stroke="#9a9a9a" stroke-width="1"/><rect x="642" y="538.5" width="21" height="12.5" fill="#dadada"/><path d="M444.5 541 L440.5 544.6 L444.5 548.2Z" fill="#555"/><rect x="663.7" y="538" width="13.5" height="13.3" fill="#fff" stroke="#9a9a9a" stroke-width="1"/><path d="M668.5 541 L672.5 544.6 L668.5 548.2Z" fill="#555"/><rect x="57.5" y="562.5" width="10.5" height="9.8" fill="none" stroke="#777" stroke-width="1"/><rect x="62" y="562" width="6.5" height="2.5" fill="#666"/><circle cx="58.3" cy="563.3" r="2.4" fill="#666"/><path d="M59.5 567 H67 M59.5 569.5 H67 M61.5 566 V572 M64.5 566 V572" stroke="#aaa" stroke-width=".8" stroke-dasharray="1 .8"/><path d="M90.5 562.8 A4.6 4.6 0 1 0 94.5 570.5" fill="none" stroke="#555" stroke-width="1.1"/><path d="M90.8 561.5 V566" stroke="#777" stroke-width="1.1"/><circle cx="90.8" cy="561" r="1" fill="#777"/><path d="M90.8 566 L94.5 566 L96 565" stroke="#555" stroke-width="1"/><path d="M93 568 L98.5 574 M98.5 568 L93 574" stroke="#333" stroke-width="1.3"/><rect x="296" y="561" width="12" height="8" fill="#555"/><circle cx="305.5" cy="570" r="3.5" fill="#555" stroke="#f3f3f3" stroke-width="1"/><rect x="407" y="557.5" width="36.5" height="16.5" fill="#d4d4d4"/><rect x="419" y="560.5" width="11" height="11" fill="none" stroke="#666" stroke-width="1"/><path d="M419 564.2 H430 M419 567.8 H430 M422.7 560.5 V571.5 M426.3 560.5 V571.5" stroke="#666" stroke-width=".9"/><rect x="457.5" y="560.5" width="11" height="11" fill="none" stroke="#666" stroke-width="1"/><rect x="460" y="563" width="6" height="6" fill="none" stroke="#777" stroke-width=".9"/><path d="M494 562 V571.5 H506.5 V562 M498 562 V566 H502 V562" fill="none" stroke="#666" stroke-width="1"/><line x1="525.5" y1="567.5" x2="531.5" y2="567.5" stroke="#555" stroke-width="1.2"/><line x1="537.5" y1="567.5" x2="629.5" y2="567.5" stroke="#888" stroke-width="1.2"/><rect x="581.7" y="562.8" width="4" height="9.2" fill="#666"/><path d="M634.3 567.5 H641.5 M637.9 564 V571" stroke="#555" stroke-width="1.2"/></svg>
<div class="t" style="left:106.9px;top:537.67px;font-size:11.5px;color:#217346;font-weight:700;">Sheet1</div>
<div class="t" style="left:8.6px;top:563.74px;font-size:10px;color:#262626;font-weight:400;">Ready</div>
<div class="t" style="left:103.0px;top:562.89px;font-size:11px;color:#262626;font-weight:400;letter-spacing:-.17px">Accessibility: Investigate</div>
<div class="t" style="left:312.9px;top:563.19px;font-size:11px;color:#262626;font-weight:400;letter-spacing:-.2px">Display Settings</div>
<div class="t" style="left:654.7px;top:563.83px;font-size:10px;color:#262626;font-weight:400;">100%</div>
</body></html>
